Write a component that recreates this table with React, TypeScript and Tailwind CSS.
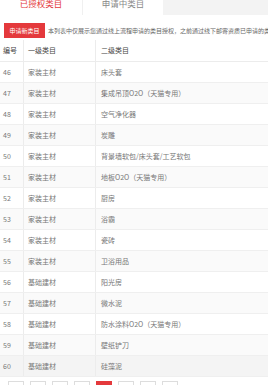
const rows = [
  { id: 46, first: '家装主材', second: '床头套' },
  { id: 47, first: '家装主材', second: '集成吊顶O2O（天猫专用）' },
  { id: 48, first: '家装主材', second: '空气净化器' },
  { id: 49, first: '家装主材', second: '炭雕' },
  { id: 50, first: '家装主材', second: '背景墙软包/床头套/工艺软包' },
  { id: 51, first: '家装主材', second: '地板O2O（天猫专用）' },
  { id: 52, first: '家装主材', second: '厨房' },
  { id: 53, first: '家装主材', second: '浴霸' },
  { id: 54, first: '家装主材', second: '瓷砖' },
  { id: 55, first: '家装主材', second: '卫浴用品' },
  { id: 56, first: '基础建材', second: '阳光房' },
  { id: 57, first: '基础建材', second: '微水泥' },
  { id: 58, first: '基础建材', second: '防水涂料O2O（天猫专用）' },
  { id: 59, first: '基础建材', second: '壁纸铲刀' },
  { id: 60, first: '基础建材', second: '硅藻泥' },
];

export default function App() {
  return (
    <div className="w-[268px] h-[385px] overflow-hidden bg-white font-['Noto_Sans_CJK_SC',sans-serif]">
      {/* Tabs */}
      <div className="flex h-[15px] bg-[#f3f3f3]">
        <div className="w-[82px] bg-white text-[#e4393c] text-[8.5px] leading-[9px] text-center -mt-[1px]">
          已授权类目
        </div>
        <div className="w-[81px] bg-white border-l border-[#f0f0f0] text-[#888] text-[8.5px] leading-[9px] text-center -mt-[1px]">
          申请中类目
        </div>
      </div>

      {/* Apply bar */}
      <div className="flex items-center mt-[8px] pl-[4px] h-[15px]">
        <div className="shrink-0 w-[41px] h-[15px] bg-[#e4393c] text-white text-[6px] flex items-center justify-center">
          申请新类目
        </div>
        <div className="ml-[3px] text-[6px] text-[#666] whitespace-nowrap">
          本列表中仅展示您通过线上流程申请的类目授权，之前通过线下邮寄资质已申请的类目不在此展示
        </div>
      </div>

      {/* Table */}
      <div className="mt-[2px] text-[7px]">
        <div className="flex h-[22px] border-b border-[#ececec] text-[#444]">
          <div className="w-[24px] flex items-center pl-[3px] border-r border-[#ececec]">编号</div>
          <div className="w-[72px] flex items-center pl-[4px] border-r border-[#ececec]">一级类目</div>
          <div className="flex-1 flex items-center pl-[5px]">二级类目</div>
        </div>
        {rows.map((r) => (
          <div
            key={r.id}
            className={`flex h-[21px] border-b border-[#efefef] text-[#777] ${
              r.id === 60 ? 'bg-[#f4f4f4]' : r.id % 2 === 1 ? 'bg-[#fafafa]' : 'bg-white'
            }`}
          >
            <div className="w-[24px] flex items-center pl-[3px] border-r border-[#ececec]">{r.id}</div>
            <div className="w-[72px] flex items-center pl-[4px] border-r border-[#ececec]">{r.first}</div>
            <div className="flex-1 flex items-center pl-[5px] whitespace-nowrap">{r.second}</div>
          </div>
        ))}
      </div>

      {/* Pagination */}
      <div className="flex gap-[6px] pl-[8px] mt-[4px]">
        {[1, 2, 3, 4, 5, 6, 7, 8].map((n) => (
          <div
            key={n}
            className={`w-[16px] h-[16px] border ${
              n === 5 ? 'bg-[#e4393c] border-[#e4393c]' : 'bg-white border-[#dddddd]'
            }`}
          />
        ))}
      </div>
    </div>
  );
}
